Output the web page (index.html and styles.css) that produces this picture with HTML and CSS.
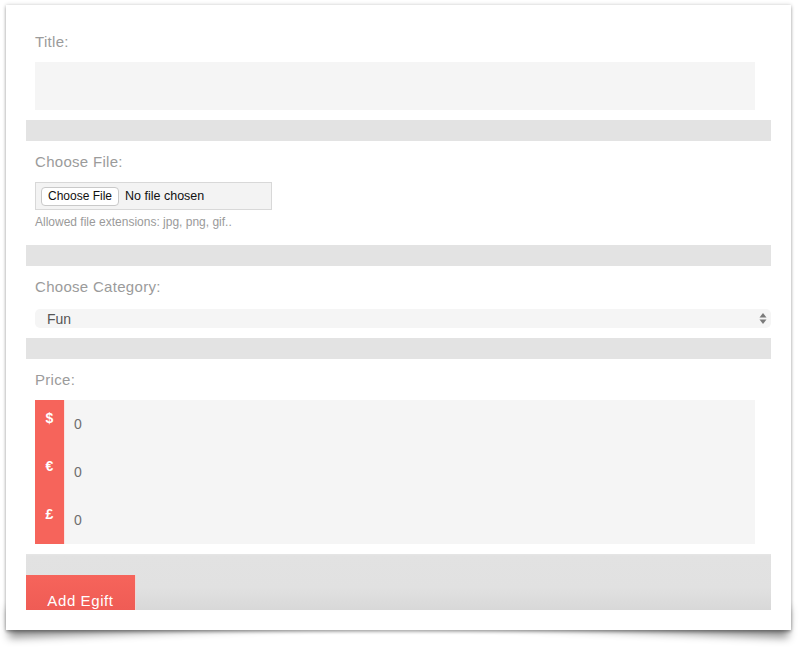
FILE: index.html
```html
<!DOCTYPE html>
<html>
<head>
<meta charset="utf-8">
<link rel="stylesheet" href="styles.css">
</head>
<body>
<div class="stage">
  <form class="card">
    <div class="field">
      <label class="lbl">Title:</label>
      <div class="text-input"></div>
    </div>
    <div class="sep"></div>

    <div class="field">
      <label class="lbl gap">Choose File:</label>
      <div class="file-box">
        <span class="file-btn">Choose File</span>
        <span class="file-name">No file chosen</span>
      </div>
      <p class="hint">Allowed file extensions: jpg, png, gif..</p>
    </div>
    <div class="sep sep-file"></div>

    <div class="field">
      <label class="lbl gap">Choose Category:</label>
    </div>
    <div class="select-wrap">
      <div class="select">
        <span class="select-val">Fun</span>
        <svg class="select-arrows" width="8" height="13" viewBox="0 0 8 13">
          <path d="M4 1 L7.5 5.5 L0.5 5.5 Z" fill="#7a7a7a"/>
          <path d="M4 12 L7.5 7.5 L0.5 7.5 Z" fill="#7a7a7a"/>
        </svg>
      </div>
    </div>
    <div class="sep"></div>

    <div class="field">
      <label class="lbl gap">Price:</label>
      <div class="price-box">
        <div class="price-row"><span class="cur">$</span><span class="amt">0</span></div>
        <div class="price-row"><span class="cur">€</span><span class="amt">0</span></div>
        <div class="price-row"><span class="cur">£</span><span class="amt">0</span></div>
      </div>
    </div>

    <div class="actions">
      <button type="button" class="submit">Add Egift</button>
    </div>
  </form>
</div>
</body>
</html>
```
FILE: styles.css
```css
html, body {
  margin: 0;
  padding: 0;
  background: #ffffff;
}
body {
  font-family: "Liberation Sans", Arial, Helvetica, sans-serif;
}
.stage {
  position: relative;
  z-index: 0;
  padding: 5px 14px 29px 6px;
  width: 785px;
}
.card {
  position: relative;
  display: block;
  background: #ffffff;
  width: 785px;
  height: 625px;
  box-sizing: border-box;
  padding: 28px 20px 0 20px;
  box-shadow: 0 0 4px rgba(0,0,0,0.2), 0 2px 3px rgba(0,0,0,0.25);
}
.card::before,
.card::after {
  content: "";
  position: absolute;
  z-index: -1;
  bottom: 16px;
  width: 47%;
  height: 30px;
  background: #999;
  box-shadow: 0 24px 9px rgba(0,0,0,0.42);
}
.card::before {
  left: 2px;
  transform: rotate(-2.4deg);
  transform-origin: left bottom;
}
.card::after {
  right: 2px;
  transform: rotate(2.4deg);
  transform-origin: right bottom;
}
.field {
  padding-left: 9px;
}
.lbl {
  display: block;
  height: 18px;
  line-height: 18px;
  font-size: 15px;
  letter-spacing: 0.3px;
  color: #9b9b9b;
}
.lbl.gap {
  margin-top: 12px;
}
.text-input {
  margin-top: 11px;
  height: 48px;
  width: 720px;
  background: #f5f5f5;
}
.sep {
  margin-top: 10px;
  height: 21px;
  background: #e3e3e3;
}
.sep.sep-file {
  margin-top: 16px;
}
.file-box {
  margin-top: 11px;
  box-sizing: border-box;
  width: 237px;
  height: 28px;
  background: #f3f3f3;
  border: 1px solid #d8d8d8;
  display: flex;
  align-items: center;
  padding-left: 5px;
  gap: 6px;
}
.file-btn {
  box-sizing: border-box;
  height: 19px;
  line-height: 17px;
  padding: 0 6px;
  background: #ffffff;
  border: 1px solid #c9c9c9;
  border-radius: 4px;
  font-size: 12px;
  color: #111;
}
.file-name {
  font-size: 12.5px;
  color: #111;
}
.hint {
  margin: 5px 0 0 0;
  line-height: 14px;
  font-size: 12px;
  color: #9a9a9a;
}
.select-wrap {
  padding-left: 9px;
  margin-top: 13px;
}
.select {
  height: 19px;
  background: #f5f5f5;
  border-radius: 5px;
  display: flex;
  align-items: center;
  justify-content: space-between;
  padding: 0 4px 0 12px;
}
.select-val {
  font-size: 14px;
  color: #555;
}
.select-arrows {
  display: block;
}
.price-box {
  margin-top: 11px;
  width: 720px;
  background: #f5f5f5;
  display: flex;
  flex-direction: column;
}
.price-row {
  display: flex;
  height: 48px;
}
.cur {
  width: 30px;
  background: #f6645b;
  border-right: 1px solid #fbe3e1;
  color: #ffffff;
  font-weight: bold;
  font-size: 14px;
  text-align: center;
  padding-top: 10px;
  line-height: 16px;
  box-sizing: border-box;
}
.amt {
  padding-left: 9px;
  padding-top: 16px;
  line-height: 16px;
  font-size: 14px;
  color: #6f6f6f;
}
.actions {
  margin-top: 10px;
  height: 56px;
  background: linear-gradient(#e6e6e6 0px, #e2e2e2 2px, #e1e1e1 60%, #d8d8d8 100%);
  display: flex;
  align-items: flex-end;
}
.submit {
  width: 109px;
  height: 35px;
  margin: 0;
  border: 0;
  padding: 16px 0 0 0;
  background: linear-gradient(#f6645b, #ef5c55);
  color: #ffffff;
  font-family: "Liberation Sans", Arial, sans-serif;
  font-size: 15px;
  letter-spacing: 0.6px;
  line-height: 19px;
  text-align: center;
  overflow: hidden;
  box-shadow: 1px 0 0 #f0d6d4;
}
```
